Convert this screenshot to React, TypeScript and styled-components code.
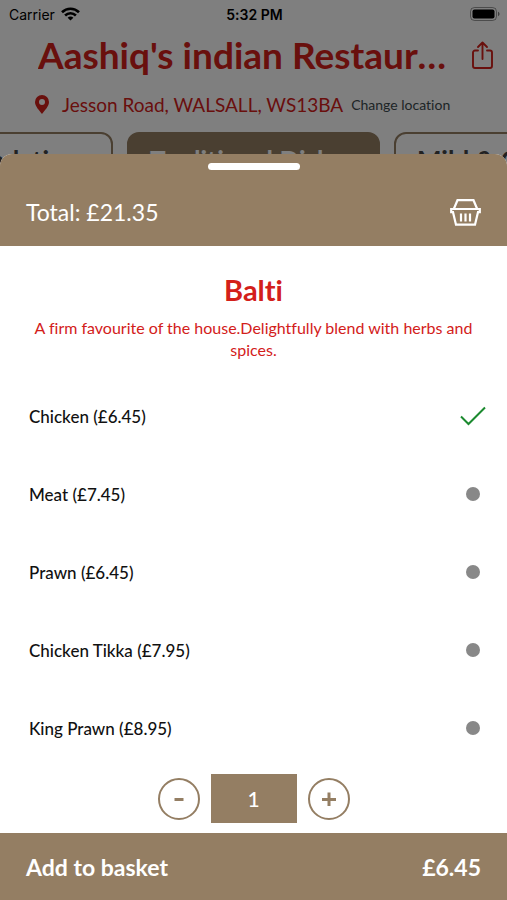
import React, { useState } from "react";
import styled, { createGlobalStyle } from "styled-components";

const brown = "#947e63";
const red = "#d3201a";

const GlobalStyle = createGlobalStyle`
  * { box-sizing: border-box; }
  body {
    margin: 0;
    background: #ffffff;
    font-family: Lato, "Open Sans", sans-serif;
    font-variant-ligatures: none;
  }
  button { font-family: inherit; cursor: pointer; }
`;

const Page = styled.div`
  min-height: 100vh;
  overflow: hidden;
`;

const StatusBar = styled.div`
  display: grid;
  grid-template-columns: 1fr auto 1fr;
  align-items: center;
  height: 28px;
  padding: 0 7px 0 9px;
  font-family: Inter, sans-serif;
  font-size: 14px;
  color: #000000;
`;

const Carrier = styled.span`
  display: flex;
  align-items: center;
  gap: 6px;
`;

const Clock = styled.time`
  font-weight: 600;
`;

const BatterySlot = styled.span`
  display: flex;
  justify-content: flex-end;
`;

const TitleRow = styled.header`
  display: flex;
  align-items: center;
  gap: 20px;
  height: 54px;
  padding: 0 14px 0 38px;
  color: ${red};
`;

const Title = styled.h1`
  flex: 1;
  min-width: 0;
  margin: 0;
  overflow: hidden;
  white-space: nowrap;
  text-overflow: ellipsis;
  font-size: 37px;
  line-height: 48px;
  font-weight: 700;
`;

const IconButton = styled.button`
  display: flex;
  padding: 0;
  border: 0;
  background: none;
  color: inherit;
`;

const LocationRow = styled.div`
  display: flex;
  align-items: center;
  height: 44px;
  padding-left: 35px;
  color: ${red};
`;

const Address = styled.span`
  margin: 0 8px 0 13px;
  font-size: 19px;
  white-space: nowrap;
`;

const ChangeLink = styled.a`
  font-size: 14px;
  color: #3c4a4e;
  text-decoration: none;
  white-space: nowrap;
`;

const Tabs = styled.nav`
  display: grid;
  grid-template-columns: minmax(0, 1fr) auto minmax(0, 1fr);
  gap: 14px;
  margin-top: 6px;

  & > :first-child { justify-self: end; }
  & > :last-child { justify-self: start; }
`;

const Tab = styled.button<{ $active?: boolean }>`
  height: 56px;
  padding: 0 21px;
  border: 2px solid ${brown};
  border-radius: 12px;
  background: ${(p) => (p.$active ? brown : "transparent")};
  color: ${(p) => (p.$active ? "#ffffff" : "#444444")};
  font-size: 26px;
  font-weight: 700;
  white-space: nowrap;
`;

const Backdrop = styled.div`
  position: fixed;
  inset: 0;
  display: flex;
  flex-direction: column;
  justify-content: flex-end;
  background: rgba(0, 0, 0, 0.5);
`;

const Sheet = styled.section`
  overflow: hidden;
  border-radius: 12px 12px 0 0;
  background: #ffffff;
`;

const SheetHeader = styled.div`
  display: flex;
  flex-direction: column;
  height: 92px;
  padding: 9px 26px 0;
  background: ${brown};
  color: #ffffff;
`;

const Grabber = styled.div`
  align-self: center;
  width: 92px;
  height: 7px;
  border-radius: 4px;
  background: #ffffff;
`;

const TotalRow = styled.div`
  display: flex;
  flex: 1;
  align-items: center;
  justify-content: space-between;
  padding: 16px 0 8px;
  font-size: 23px;
`;

const Dish = styled.div`
  padding: 25px 24px 16px;
  text-align: center;
  color: ${red};
`;

const DishName = styled.h2`
  margin: 0;
  font-size: 29px;
  line-height: 38px;
  font-weight: 700;
`;

const Description = styled.p`
  margin: 8px 0 0;
  font-size: 16px;
  line-height: 22px;
`;

const Options = styled.fieldset`
  margin: 0;
  padding: 0;
  border: 0;
`;

const Option = styled.label`
  display: flex;
  align-items: center;
  justify-content: space-between;
  height: 78px;
  padding: 0 21px 0 29px;
  font-size: 17px;
  font-weight: 500;
  color: #111111;
`;

const Mark = styled.span`
  display: grid;
  place-items: center;
  width: 26px;
  height: 26px;

  & > * { grid-area: 1 / 1; }
  svg { visibility: hidden; }
  input:checked + svg { visibility: visible; }
`;

const Radio = styled.input`
  appearance: none;
  width: 14px;
  height: 14px;
  margin: 0;
  border-radius: 50%;
  background: #888888;

  &:checked { background: transparent; }
`;

const Quantity = styled.div`
  display: flex;
  align-items: center;
  justify-content: center;
  gap: 11px;
  padding: 7px 0 10px;
`;

const RoundButton = styled.button`
  display: grid;
  place-items: center;
  width: 42px;
  height: 42px;
  padding: 0;
  border: 2px solid ${brown};
  border-radius: 50%;
  background: #ffffff;
  color: ${brown};
`;

const Count = styled.output`
  display: grid;
  place-items: center;
  width: 86px;
  height: 49px;
  background: ${brown};
  color: #ffffff;
  font-size: 21px;
  font-weight: 500;
`;

const AddButton = styled.button`
  display: flex;
  align-items: center;
  justify-content: space-between;
  width: 100%;
  height: 67px;
  padding: 0 26px;
  border: 0;
  background: ${brown};
  color: #ffffff;
  font-size: 23px;
  font-weight: 700;
`;

const WifiIcon = () => (
  <svg width="19" height="14" viewBox="0 0 19 14" fill="none" stroke="#000" strokeWidth="2.6" aria-hidden="true">
    <path d="M1 5.2C5.8.5 13.2.5 18 5.2" />
    <path d="M4.1 8.5c3.1-3 7.7-3 10.8 0" />
    <path d="M9.5 13.6 6.6 10.7c1.6-1.5 4.2-1.5 5.8 0z" fill="#000" stroke="none" />
  </svg>
);

const BatteryIcon = () => (
  <svg width="30" height="14" viewBox="0 0 30 14" aria-hidden="true">
    <rect x="0.5" y="0.5" width="26" height="13" rx="4" fill="none" stroke="#000" strokeOpacity="0.4" />
    <rect x="2.5" y="2.5" width="22" height="9" rx="2" fill="#000" />
    <path d="M28 4.8c2 .7 2 3.7 0 4.4z" fill="#000" fillOpacity="0.5" />
  </svg>
);

const ShareIcon = () => (
  <svg width="21" height="29" viewBox="0 0 21 29" fill="none" stroke="currentColor" strokeWidth="1.9" strokeLinecap="round" strokeLinejoin="round" aria-hidden="true">
    <path d="M6 9.5H3a2 2 0 0 0-2 2V25a2 2 0 0 0 2 2h15a2 2 0 0 0 2-2V11.5a2 2 0 0 0-2-2h-3" />
    <path d="M10.5 18V1.5M6 6l4.5-4.5L15 6" />
  </svg>
);

const PinIcon = () => (
  <svg width="14" height="19" viewBox="0 0 14 19" aria-hidden="true">
    <path fill="currentColor" fillRule="evenodd" d="M7 0a7 7 0 0 0-7 7c0 4.5 4.5 8.5 7 12 2.5-3.5 7-7.5 7-12a7 7 0 0 0-7-7zm0 4a3 3 0 1 1 0 6 3 3 0 0 1 0-6z" />
  </svg>
);

const BasketIcon = () => (
  <svg width="31" height="27" viewBox="0 0 31 27" fill="none" stroke="currentColor" strokeWidth="2.2" aria-hidden="true">
    <path d="M4 9.5 7.5 1.2h16L27 9.5" />
    <path d="M1.2 10h28.6v3.2h-1.8L25 25.7H6L3 13.2H1.2z" />
    <path d="M11 14.5v8M15.5 14.5v8M20 14.5v8" />
  </svg>
);

const TickIcon = () => (
  <svg width="26" height="20" viewBox="0 0 26 20" fill="none" stroke="#1b8a2f" strokeWidth="2" aria-hidden="true">
    <path d="M1 10.5 8.5 18 25 1.5" />
  </svg>
);

const MinusIcon = () => (
  <svg width="14" height="14" viewBox="0 0 14 14" stroke="currentColor" strokeWidth="3" aria-hidden="true">
    <path d="M2.5 7.5h9" />
  </svg>
);

const PlusIcon = () => (
  <svg width="14" height="14" viewBox="0 0 14 14" stroke="currentColor" strokeWidth="3" aria-hidden="true">
    <path d="M0 7.5h14M7 0.5v14" />
  </svg>
);

const options = [
  { name: "Chicken", price: 6.45 },
  { name: "Meat", price: 7.45 },
  { name: "Prawn", price: 6.45 },
  { name: "Chicken Tikka", price: 7.95 },
  { name: "King Prawn", price: 8.95 },
];

export default function App() {
  const [selected, setSelected] = useState(0);
  const [count, setCount] = useState(1);

  return (
    <>
      <GlobalStyle />
      <Page>
        <StatusBar>
          <Carrier>
            Carrier <WifiIcon />
          </Carrier>
          <Clock>5:32 PM</Clock>
          <BatterySlot>
            <BatteryIcon />
          </BatterySlot>
        </StatusBar>
        <TitleRow>
          <Title>Aashiq's indian Restaurant</Title>
          <IconButton aria-label="Share">
            <ShareIcon />
          </IconButton>
        </TitleRow>
        <LocationRow>
          <PinIcon />
          <Address>Jesson Road, WALSALL, WS13BA</Address>
          <ChangeLink href="#location">Change location</ChangeLink>
        </LocationRow>
        <Tabs>
          <Tab>Recommendations</Tab>
          <Tab $active>Traditional Dishes</Tab>
          <Tab>Mild &amp; Creamy</Tab>
        </Tabs>
      </Page>
      <Backdrop>
        <Sheet role="dialog" aria-label="Balti">
          <SheetHeader>
            <Grabber />
            <TotalRow>
              <span>Total: £21.35</span>
              <IconButton aria-label="Basket">
                <BasketIcon />
              </IconButton>
            </TotalRow>
          </SheetHeader>
          <Dish>
            <DishName>Balti</DishName>
            <Description>
              A firm favourite of the house.Delightfully blend with herbs and spices.
            </Description>
          </Dish>
          <Options aria-label="Choose an option">
            {options.map((option, i) => (
              <Option key={option.name}>
                {option.name} (£{option.price.toFixed(2)})
                <Mark>
                  <Radio type="radio" name="option" checked={selected === i} onChange={() => setSelected(i)} />
                  <TickIcon />
                </Mark>
              </Option>
            ))}
          </Options>
          <Quantity>
            <RoundButton aria-label="Decrease quantity" onClick={() => setCount(Math.max(1, count - 1))}>
              <MinusIcon />
            </RoundButton>
            <Count>{count}</Count>
            <RoundButton aria-label="Increase quantity" onClick={() => setCount(count + 1)}>
              <PlusIcon />
            </RoundButton>
          </Quantity>
          <AddButton>
            <span>Add to basket</span>
            <span>£{(options[selected].price * count).toFixed(2)}</span>
          </AddButton>
        </Sheet>
      </Backdrop>
    </>
  );
}
